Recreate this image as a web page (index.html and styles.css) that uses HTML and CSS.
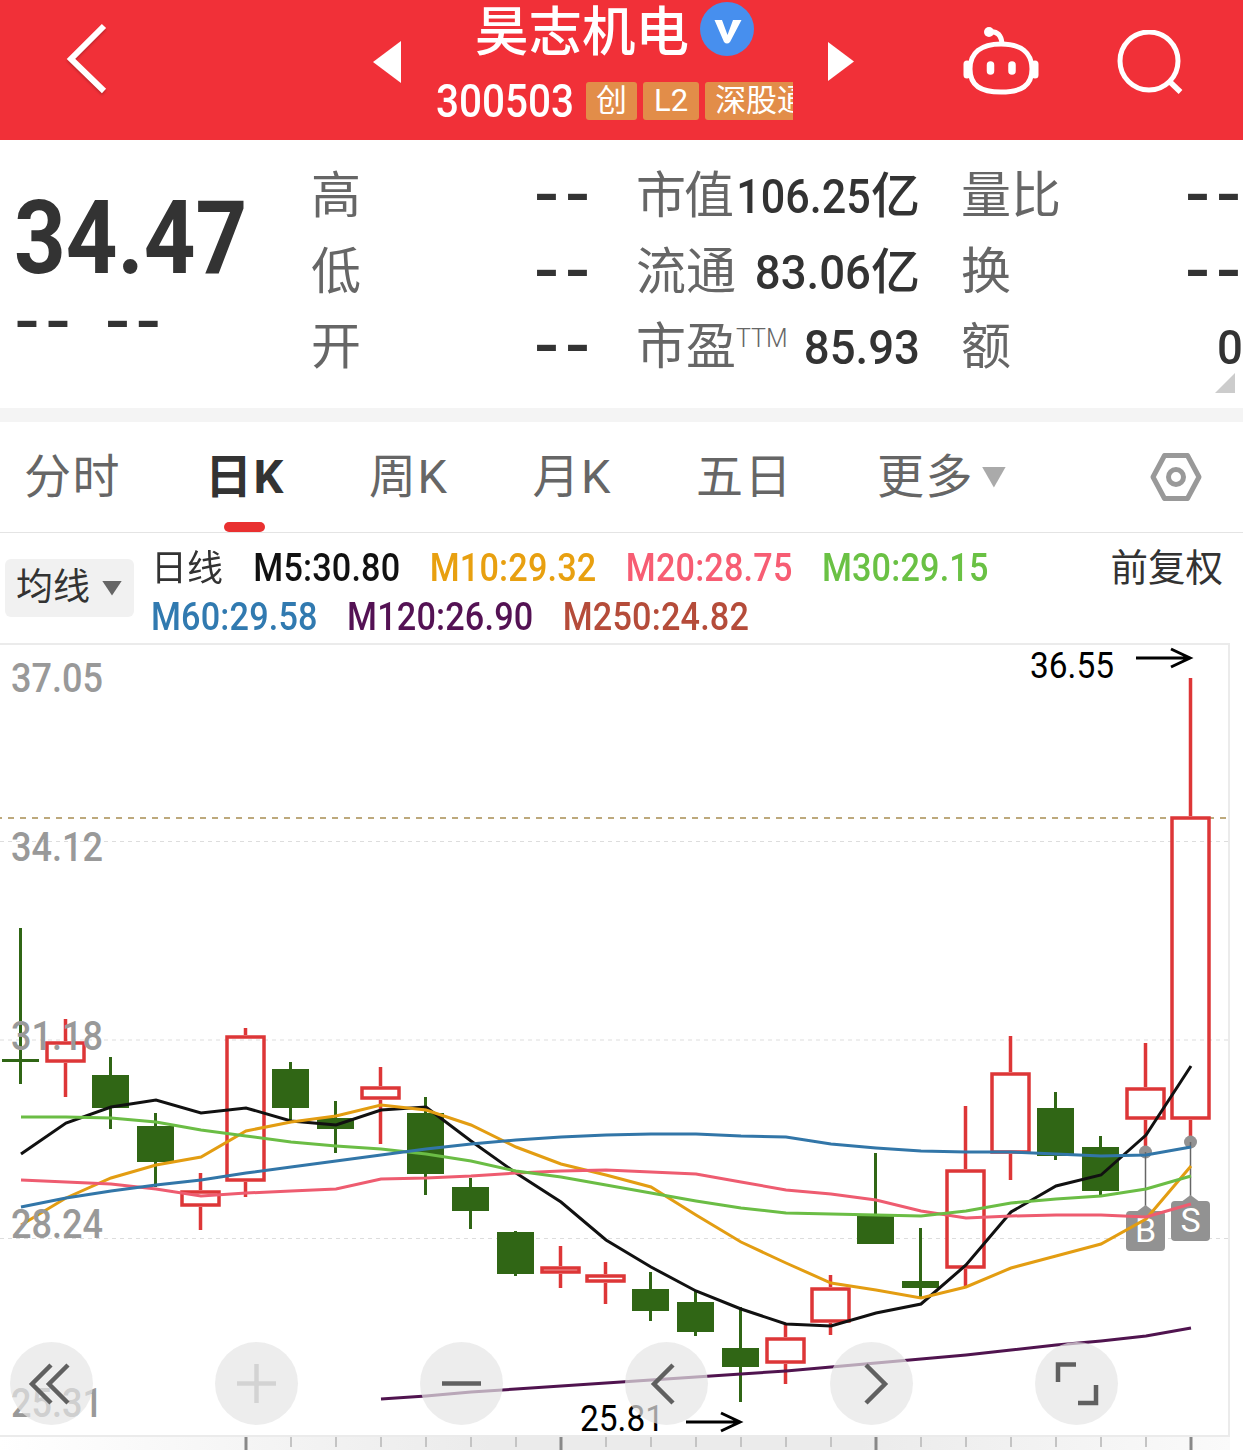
FILE: index.html
```html
<!DOCTYPE html>
<html lang="zh-CN">
<head>
  <meta charset="UTF-8">
  <meta name="viewport" content="width=device-width, initial-scale=1.0">
  <title>昊志机电 300503</title>
  <link rel="stylesheet" href="styles.css">
</head>
<body>
  <header class="header">
    <svg class="back" width="44" height="74" viewBox="0 0 44 74">
      <path d="M38 4 L5 37 L38 69" fill="none" stroke="#fff" stroke-width="6"/>
    </svg>
    <svg class="prev" width="28" height="42" viewBox="0 0 28 42"><path d="M28 0 V42 L0 21 Z" fill="#fff"/></svg>
    <div class="stock">
      <div class="stock-name">
        <h1>昊志机电</h1>
        <svg width="54" height="54" viewBox="0 0 54 54">
          <circle cx="27" cy="27" r="27" fill="#478fee"/>
          <path d="M14.500 18 H22 L27.500 33 L33 18 H41.500 L30 40 Q27 43 24 40 Z" fill="#fff"/>
        </svg>
      </div>
      <div class="stock-code">
        <span class="code">300503</span>
        <span class="tag">创</span>
        <span class="tag">L2</span>
        <span class="tag">深股通</span>
      </div>
    </div>
    <svg class="next" width="26" height="39" viewBox="0 0 26 39"><path d="M0 0 V39 L26 19.500 Z" fill="#fff"/></svg>
    <svg class="robot" width="76" height="70" viewBox="0 0 76 70" fill="none" stroke="#fff" stroke-width="5">
      <circle cx="26" cy="5" r="5" fill="#fff" stroke="none"/>
      <path d="M26 5 C34 4 38 8 39 16"/>
      <path d="M38 17 C58 17 69 26 69 42 C69 59 58 65 38 65 C18 65 7 59 7 42 C7 26 18 17 38 17 Z"/>
      <path d="M4 37 V48 M72 37 V48" stroke-width="7" stroke-linecap="round"/>
      <path d="M27.500 38 V44 M49 38 V44" stroke-width="7.500" stroke-linecap="round"/>
    </svg>
    <svg class="search" width="68" height="66" viewBox="0 0 68 66" fill="none" stroke="#fff" stroke-width="5">
      <circle cx="32" cy="31" r="29"/>
      <path d="M52 51 L63.500 62" stroke-width="5.500"/>
    </svg>
  </header>

  <section class="quote">
    <div class="price">
      <div class="last">34.47</div>
      <div class="change dash">-- --</div>
    </div>
    <dl class="stats open">
      <div><dt>高</dt><dd class="dash">--</dd></div>
      <div><dt>低</dt><dd class="dash">--</dd></div>
      <div><dt>开</dt><dd class="dash">--</dd></div>
    </dl>
    <dl class="stats cap">
      <div><dt class="tight">市值</dt><dd><span class="num tight">106.25</span>亿</dd></div>
      <div><dt>流通</dt><dd><span class="num">83.06</span>亿</dd></div>
      <div><dt>市盈<sup>TTM</sup></dt><dd><span class="num">85.93</span></dd></div>
    </dl>
    <dl class="stats volume">
      <div><dt>量比</dt><dd class="dash">--</dd></div>
      <div><dt>换</dt><dd class="dash">--</dd></div>
      <div><dt>额</dt><dd><span class="num">0</span></dd></div>
    </dl>
    <i class="corner"></i>
  </section>

  <nav class="tabs">
    <a>分时</a>
    <a class="active">日K</a>
    <a>周K</a>
    <a>月K</a>
    <a>五日</a>
    <a class="more">更多<i class="arrow"></i></a>
    <svg class="settings" width="54" height="50" viewBox="0 0 54 50" fill="none" stroke="#999" stroke-width="5" stroke-linejoin="round">
      <path d="M15.500 3.500 H38.500 L50 25 L38.500 46.500 H15.500 L4 25 Z"/>
      <circle cx="27" cy="25" r="7.500"/>
    </svg>
  </nav>

  <section class="legend">
    <button class="ma-btn">均线<i class="arrow"></i></button>
    <div class="ma-list">
      <span class="title">日线</span>
      <span class="m5">M5:30.80</span>
      <span class="m10">M10:29.32</span>
      <span class="m20">M20:28.75</span>
      <span class="m30">M30:29.15</span>
      <br>
      <span class="m60">M60:29.58</span>
      <span class="m120">M120:26.90</span>
      <span class="m250">M250:24.82</span>
    </div>
    <span class="adjust">前复权</span>
  </section>

  <section class="chart">
    <svg id="kline" width="1243" height="807" viewBox="0 643 1243 807">
      <defs>
        <linearGradient id="axisBg">
          <stop offset="0" stop-color="#fff"/>
          <stop offset="0.400" stop-color="#ebebeb"/>
          <stop offset="0.700" stop-color="#ebebeb"/>
          <stop offset="1" stop-color="#fafafa"/>
        </linearGradient>
      </defs>
      <rect x="0" y="1437" width="1230" height="13" fill="url(#axisBg)"/>
      <path class="frame" d="M0 644 H1229 V1436 H0"/>
      <path class="grid" d="M0 841.500 H1228 M0 1040 H1228 M0 1238.500 H1228"/>
      <path class="last-line" d="M-4 818 H1229"/>
      <g id="ticks"></g>
      <g id="candles"></g>
      <g id="marks"></g>
      <g id="lines"></g>
      <g class="axis">
        <text x="11" y="692" textLength="92" lengthAdjust="spacingAndGlyphs">37.05</text>
        <text x="11" y="861" textLength="92" lengthAdjust="spacingAndGlyphs">34.12</text>
        <text x="11" y="1050" textLength="92" lengthAdjust="spacingAndGlyphs">31.18</text>
        <text x="11" y="1238" textLength="92" lengthAdjust="spacingAndGlyphs">28.24</text>
        <text x="11" y="1417" textLength="92" lengthAdjust="spacingAndGlyphs">25.31</text>
      </g>
      <g class="extreme">
        <text x="1030" y="678" textLength="84" lengthAdjust="spacingAndGlyphs">36.55</text>
        <path d="M1136 658 H1190 M1171 649 L1190 658 L1171 667"/>
        <text x="580" y="1431" textLength="84" lengthAdjust="spacingAndGlyphs">25.81</text>
        <path d="M686 1422 H740 M721 1413 L740 1422 L721 1431"/>
      </g>
    </svg>

    <div class="controls">
      <button><svg viewBox="0 0 83 83"><path d="M41 23 L22 42 L41 61 M58 23 L39 42 L58 61"/></svg></button>
      <button class="disabled"><svg viewBox="0 0 83 83"><path d="M22 41.500 H61 M41.500 22 V61"/></svg></button>
      <button><svg viewBox="0 0 83 83"><path d="M22 41.500 H61"/></svg></button>
      <button><svg viewBox="0 0 83 83"><path d="M48 23 L29 42 L48 61"/></svg></button>
      <button><svg viewBox="0 0 83 83"><path d="M36 23 L55 42 L36 61"/></svg></button>
      <button><svg viewBox="0 0 83 83"><path d="M23 40 V22.500 H41 M43 61 H61 V43"/></svg></button>
    </div>
  </section>

  <script>
    const STEP = 45;
    const START = 20.5;

    // [direction, high, low, body top, body bottom]
    const candles = [
      ['d', 928, 1084, 1059, 1062], ['u', 1019, 1097, 1041, 1063], ['d', 1057, 1129, 1075, 1108],
      ['d', 1113, 1187, 1126, 1162], ['u', 1173, 1230, 1190, 1207], ['u', 1028, 1197, 1035, 1182],
      ['d', 1062, 1120, 1069, 1108], ['d', 1101, 1153, 1118, 1129], ['u', 1067, 1144, 1086, 1100],
      ['d', 1097, 1195, 1113, 1174], ['d', 1178, 1229, 1187, 1211], ['d', 1231, 1276, 1232, 1274],
      ['u', 1246, 1288, 1266, 1274], ['u', 1262, 1304, 1274, 1283], ['d', 1272, 1321, 1289, 1311],
      ['d', 1291, 1336, 1302, 1332], ['d', 1307, 1402, 1348, 1367], ['u', 1324, 1384, 1337, 1364],
      ['u', 1275, 1335, 1287, 1323], ['d', 1153, 1244, 1216, 1244], ['d', 1228, 1297, 1281, 1288],
      ['u', 1106, 1287, 1169, 1269], ['u', 1036, 1180, 1072, 1154], ['d', 1092, 1160, 1108, 1156],
      ['d', 1136, 1195, 1147, 1191], ['u', 1043, 1152, 1087, 1120], ['u', 678, 1142, 816, 1120]
    ];

    const averages = [
      { color: '#111', from: 0, y: [1154, 1123, 1107, 1100, 1113, 1108, 1121, 1125, 1110, 1107, 1141, 1173, 1202, 1240, 1267, 1291, 1309, 1324, 1326, 1313, 1304, 1265, 1212, 1186, 1175, 1135, 1066] },
      { color: '#e39d12', from: 0, y: [1225, 1198, 1178, 1165, 1157, 1131, 1122, 1116, 1105, 1110, 1125, 1147, 1164, 1175, 1187, 1215, 1242, 1263, 1283, 1290, 1298, 1287, 1268, 1256, 1244, 1219, 1166] },
      { color: '#ee5c70', from: 0, y: [1180, 1182, 1184, 1189, 1196, 1193, 1191, 1189, 1179, 1178, 1176, 1173, 1171, 1170, 1172, 1174, 1182, 1190, 1194, 1200, 1211, 1218, 1216, 1215, 1215, 1217, 1204] },
      { color: '#6bbd45', from: 0, y: [1117, 1117, 1118, 1122, 1130, 1136, 1142, 1146, 1149, 1154, 1161, 1171, 1177, 1185, 1193, 1201, 1208, 1213, 1214, 1215, 1216, 1211, 1203, 1199, 1196, 1189, 1176] },
      { color: '#3276a8', from: 0, y: [1207, 1198, 1191, 1185, 1180, 1173, 1167, 1161, 1155, 1149, 1144, 1140, 1137, 1135, 1134, 1134, 1136, 1137, 1144, 1148, 1151, 1152, 1152, 1154, 1156, 1155, 1147] },
      { color: '#50144f', from: 8, y: [1399, 1396, 1392, 1389, 1386, 1383, 1380, 1377, 1374, 1371, 1367, 1363, 1359, 1355, 1350, 1345, 1341, 1336, 1328] }
    ];

    const trades = [
      { label: 'B', index: 25, low: 1152, top: 1211 },
      { label: 'S', index: 26, low: 1142, top: 1201 }
    ];

    function xAt(i) {
      return START + i * STEP;
    }

    document.getElementById('candles').innerHTML = candles.map(([dir, high, low, top, bottom], i) => {
      const x = xAt(i);
      const wick = `<path d="M${x} ${high} V${top} M${x} ${bottom} V${low}"/>`;
      const body = dir === 'u'
        ? `<rect x="${x - 18.5}" y="${top + 2}" width="37" height="${bottom - top - 4}"/>`
        : `<rect x="${x - 18.5}" y="${top}" width="37" height="${bottom - top}"/>`;
      return `<g class="${dir === 'u' ? 'up' : 'down'}">${wick}${body}</g>`;
    }).join('');

    document.getElementById('lines').innerHTML = averages.map(({ color, from, y }) => {
      const points = y.map((v, i) => `${xAt(i + from) + 0.5},${v}`).join(' ');
      return `<polyline points="${points}" stroke="${color}"/>`;
    }).join('');

    document.getElementById('marks').innerHTML = trades.map(({ label, index, low, top }) => {
      const x = xAt(index);
      return `<circle cx="${x}" cy="${low}" r="6.5"/>
        <path class="stem" d="M${x} ${low} V${top - 3}"/>
        <path d="M${x - 8} ${top} L${x} ${top - 6} L${x + 8} ${top} Z"/>
        <rect x="${x - 19.5}" y="${top}" width="39" height="40" rx="4"/>
        <text x="${x}" y="${top + 31}">${label}</text>`;
    }).join('');

    // axis ticks, every seventh one is a major tick
    let ticks = '';
    for (let i = 5; i < candles.length; i++) {
      const major = (i - 5) % 7 === 0;
      ticks += `<path class="${major ? 'major' : ''}" d="M${xAt(i) + 0.5} 1437 V${major ? 1450 : 1447}"/>`;
    }
    document.getElementById('ticks').innerHTML = ticks;
  </script>
</body>
</html>
```
FILE: styles.css
```css
* {
  box-sizing: border-box;
}

body {
  margin: 0;
  width: 1243px;
  height: 1450px;
  overflow: hidden;
  background: #fff;
  color: #333;
  font-family: Roboto, 'Noto Sans CJK SC', sans-serif;
}

h1, dl, dd {
  margin: 0;
}

svg {
  display: block;
  flex: none;
}

button {
  border: none;
  padding: 0;
  font-family: inherit;
}

/* Header */
.header {
  display: flex;
  align-items: flex-start;
  height: 140px;
  background: #f13038;
  color: #fff;
}

.back {
  margin: 22px 0 0 66px;
  filter: drop-shadow(0 2px 1px rgba(0, 0, 0, 0.2));
}

.prev {
  margin: 41px 0 0 263px;
}

.stock {
  width: 357px;
  margin-left: 35px;
}

.stock-name {
  display: flex;
  align-items: flex-start;
  padding: 2px 0 0 39px;
  gap: 11px;
  height: 56px;
}

.stock-name h1 {
  font-size: 53.500px;
  font-weight: 500;
  line-height: 61px;
}

.stock-code {
  display: flex;
  align-items: center;
  gap: 6px;
  margin-top: 26px;
  height: 38px;
  overflow: hidden;
}

.code {
  flex: none;
  width: 144px;
  font-size: 46px;
  font-weight: 500;
  line-height: 38px;
  transform: scaleX(0.880);
  transform-origin: left;
}

.tag {
  flex: none;
  height: 38px;
  padding: 0 10px;
  border-radius: 3px;
  background: #e28d49;
  font-size: 31px;
  line-height: 37px;
}

.tag:nth-child(3) {
  padding: 0 11px;
}

.next {
  margin: 42px 0 0 35px;
}

.robot {
  margin: 27px 0 0 109px;
}

.search {
  margin: 30px 0 0 78px;
}

/* Quote */
.quote {
  position: relative;
  display: flex;
  height: 282px;
  padding-top: 18px;
  border-bottom: 14px solid #f4f4f4;
}

.price {
  width: 311px;
  padding: 20px 0 0 14px;
}

.last {
  font-size: 102px;
  font-weight: 700;
  line-height: 120px;
  transform: scaleX(0.885);
  transform-origin: left;
}

.stats > div {
  display: flex;
  justify-content: space-between;
  height: 75.500px;
  line-height: 77px;
  white-space: nowrap;
}

.stats dt {
  color: #666;
  font-size: 50px;
}

.stats dt.tight {
  letter-spacing: -2px;
}

.stats dd {
  font-size: 49px;
  font-weight: 500;
}

.num {
  display: inline-block;
  transform: scaleX(0.93);
  transform-origin: right;
}

.num.tight {
  margin-left: -20px;
  transform: scaleX(0.88);
}

.stats sup {
  font-size: 25px;
  font-weight: 300;
  vertical-align: 17px;
  line-height: 0;
}

.open {
  width: 281px;
}

.cap {
  width: 284px;
  margin-left: 44px;
}

.volume {
  width: 282px;
  margin-left: 41px;
}

.dash, .stats dd.dash {
  font-family: 'Liberation Mono', monospace;
  font-size: 52px;
  font-weight: 700;
  letter-spacing: -7px;
  transform: scaleX(1.28);
  transform-origin: right;
}

.stats dd.dash {
  padding-right: 3px;
}

.change.dash {
  margin: -4px 0 0 -7px;
  line-height: 60px;
  word-spacing: -2px;
  transform-origin: left;
}

.corner {
  position: absolute;
  right: 8px;
  bottom: 15px;
  width: 20px;
  height: 20px;
  background: #ccc;
  clip-path: polygon(100% 0, 100% 100%, 0 100%);
}

/* Tabs */
.tabs {
  display: flex;
  align-items: center;
  gap: 84px;
  height: 111px;
  padding: 0 40px 0 24px;
  border-bottom: 1px solid #e4e4e4;
  color: #666;
  font-size: 47px;
  letter-spacing: 1.500px;
}

.tabs a {
  position: relative;
  line-height: 112px;
}

.tabs .active {
  color: #333;
  font-weight: 700;
}

.tabs .active::after {
  content: '';
  position: absolute;
  left: 50%;
  bottom: 1px;
  width: 41px;
  height: 10px;
  margin-left: -21px;
  border-radius: 5px;
  background: #e93030;
}

.more {
  display: flex;
  align-items: center;
}

.arrow {
  display: inline-block;
  width: 24px;
  height: 21px;
  margin-left: 8px;
  background: #aaa;
  clip-path: polygon(0 0, 100% 0, 50% 100%);
}

.settings {
  margin-left: auto;
}

/* Moving averages */
.legend {
  display: flex;
  height: 110px;
  padding: 11px 20px 0 5px;
}

.ma-btn {
  display: flex;
  align-items: center;
  width: 129px;
  height: 58px;
  margin-top: 15px;
  padding-left: 11px;
  border-radius: 6px;
  background: #f1f1f1;
  color: #333;
  font-size: 37px;
  line-height: 58px;
}

.ma-btn .arrow {
  width: 20px;
  height: 15px;
  margin-left: 12px;
  background: #666;
}

.ma-list {
  width: 900px;
  margin-left: 17px;
  font-size: 38px;
  font-weight: 500;
  line-height: 48px;
  letter-spacing: 0.200px;
  word-spacing: 23px;
  white-space: nowrap;
  transform: scaleX(0.9);
  transform-origin: left;
}

.ma-list .title {
  display: inline-block;
  width: 81px;
  font-size: 36px;
  font-weight: 400;
  letter-spacing: 0;
  transform: scaleX(1.110);
  transform-origin: left;
}

.m5 { color: #111; }
.m10 { color: #e8a010; }
.m20 { color: #f75d73; }
.m30 { color: #6ac144; }
.m60 { color: #317ab0; }
.m120 { color: #541254; }
.m250 { color: #b54c3a; }

.adjust {
  margin-left: auto;
  font-size: 37.500px;
  line-height: 48px;
}

/* Chart */
.chart {
  position: relative;
  height: 807px;
}

.frame {
  fill: none;
  stroke: #ebebeb;
  stroke-width: 2;
}

.grid {
  stroke: #ddd;
  stroke-width: 1;
  stroke-dasharray: 4 4;
}

.last-line {
  stroke: #bda97c;
  stroke-width: 2;
  stroke-dasharray: 6 6;
}

#ticks path {
  stroke: #c4c4c4;
  stroke-width: 2;
}

#ticks .major {
  stroke: #888;
  stroke-width: 3;
}

.up {
  fill: none;
  stroke: #dd3637;
  stroke-width: 3.500;
}

.down {
  fill: #306615;
}

.down path {
  stroke: #306615;
  stroke-width: 3;
}

#lines {
  fill: none;
  stroke-width: 3;
}

#marks {
  fill: #929292;
}

#marks .stem {
  stroke: #666;
  stroke-width: 1.500;
}

#marks text {
  fill: #fff;
  font-size: 34px;
  text-anchor: middle;
}

.axis {
  fill: #999;
  font-size: 40px;
  font-weight: 500;
}

.extreme {
  fill: #000;
  font-size: 36px;
}

.extreme path {
  fill: none;
  stroke: #000;
  stroke-width: 3;
}

.controls {
  position: absolute;
  left: 10px;
  top: 699px;
  display: flex;
  gap: 122px;
}

.controls button {
  width: 83px;
  height: 83px;
  border-radius: 50%;
  background: rgba(230, 230, 230, 0.7);
}

.controls path {
  fill: none;
  stroke: #606060;
  stroke-width: 4.500;
}

.controls .disabled path {
  stroke: #d3d3d3;
}
```
